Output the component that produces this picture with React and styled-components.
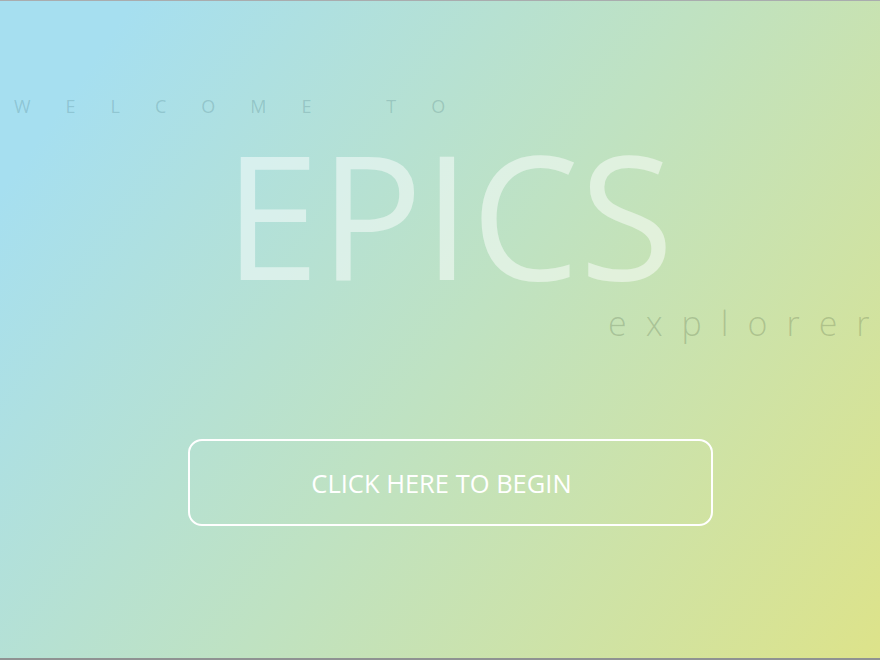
import React from "react";
import styled, { createGlobalStyle } from "styled-components";

const Global = createGlobalStyle`
  html, body { margin: 0; padding: 0; }
  body { font-family: "Open Sans", "Liberation Sans", sans-serif; }
`;

const Page = styled.div`
  width: 880px;
  height: 660px;
  box-sizing: border-box;
  border-top: 1px solid #a9acae;
  border-bottom: 2px solid #8f9292;
  background: linear-gradient(125deg, #a6dff0 10%, #bfe2c2 52%, #dde38a 100%);
  overflow: hidden;
  display: flex;
  flex-direction: column;
`;

const Welcome = styled.div`
  margin: 93px 0 0 14px;
  font-size: 18px;
  font-weight: 400;
  letter-spacing: 35px;
  color: rgba(40, 90, 100, 0.2);
  line-height: 24px;
  white-space: nowrap;
`;

const Title = styled.h1`
  margin: 5px 0 0 0;
  padding-left: 224px;
  font-size: 172px;
  font-weight: 400;
  letter-spacing: 0;
  line-height: 180px;
  color: rgba(255, 255, 255, 0.5);
  white-space: nowrap;
`;

const Subtitle = styled.div`
  margin: 0 0 0 608px;
  font-size: 34px;
  font-weight: 300;
  letter-spacing: 19px;
  color: rgba(60, 80, 50, 0.22);
  line-height: 40px;
  white-space: nowrap;
`;

const BeginButton = styled.button`
  margin: 96px 0 0 188px;
  padding: 0 18px 0 0;
  width: 525px;
  height: 87px;
  box-sizing: border-box;
  border: 2px solid #ffffff;
  border-radius: 14px;
  background: transparent;
  color: #ffffff;
  font-family: "Open Sans", "Liberation Sans", sans-serif;
  font-size: 25.5px;
  font-weight: 400;
  cursor: pointer;
`;

export default function App() {
  return (
    <>
      <Global />
      <Page>
        <Welcome>WELCOME TO</Welcome>
        <Title>EPICS</Title>
        <Subtitle>explorer</Subtitle>
        <BeginButton>CLICK HERE TO BEGIN</BeginButton>
      </Page>
    </>
  );
}
